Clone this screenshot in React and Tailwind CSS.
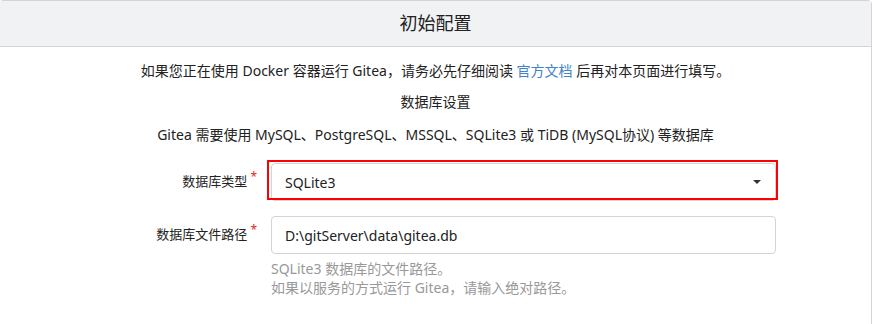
import React from "react";

const font = {
  fontFamily: '"Segoe UI", "Noto Sans", "Noto Sans CJK SC", sans-serif',
};

const Field = ({ label, children }) => (
  <div className="flex items-center">
    <label className="w-[257px] shrink-0 text-right text-[13px] text-[#222] mr-[14px]">
      {label}
      <span className="relative -top-[5px] ml-[3px] text-[12px] text-[#db2828]">*</span>
    </label>
    {children}
  </div>
);

const App = () => {
  return (
    <div className="bg-white w-[876px] h-[324px] overflow-hidden" style={font}>
      <div className="w-[873px] -ml-px border border-[#d4d4d5] rounded-t h-[340px]">
        <div className="h-[46px] bg-[#f1f2f4] border-b border-[#d4d4d5] flex items-center justify-center">
          <h3 className="text-[18px] text-[#222]">初始配置</h3>
        </div>

        <div className="pt-[14px] text-[14px] text-[#222]">
          <p className="text-center leading-5">
            如果您正在使用 Docker 容器运行 Gitea，请务必先仔细阅读{" "}
            <a className="text-[#4183c4]">官方文档</a> 后再对本页面进行填写。
          </p>
          <h4 className="text-center leading-5 mt-[11px]">数据库设置</h4>
          <p className="text-center leading-5 mt-[13px]">
            Gitea 需要使用 MySQL、PostgreSQL、MSSQL、SQLite3 或 TiDB (MySQL协议) 等数据库
          </p>

          <div className="mt-[18px] flex flex-col gap-[15px]">
            <Field label="数据库类型">
              <div className="relative w-[505px] h-[38px] border border-[#d4d4d5] rounded flex items-center justify-between px-[13px]">
                <span>SQLite3</span>
                <span className="mr-[1px] w-0 h-0 border-x-[4px] border-x-transparent border-t-[4px] border-t-[#333]" />
                <div className="absolute -left-[5px] -top-[4px] w-[511px] h-[40px] border-[2px] border-[#ff0000]" />
              </div>
            </Field>
            <div>
              <Field label="数据库文件路径">
                <div className="w-[505px] h-[38px] border border-[#d4d4d5] rounded flex items-center px-[13px]">
                  D:\gitServer\data\gitea.db
                </div>
              </Field>
              <div className="ml-[271px] mt-[5px] text-[14px] leading-[19px] text-[#999]">
                <div>SQLite3 数据库的文件路径。</div>
                <div>如果以服务的方式运行 Gitea，请输入绝对路径。</div>
              </div>
            </div>
          </div>
        </div>
      </div>
    </div>
  );
};

export default App;
